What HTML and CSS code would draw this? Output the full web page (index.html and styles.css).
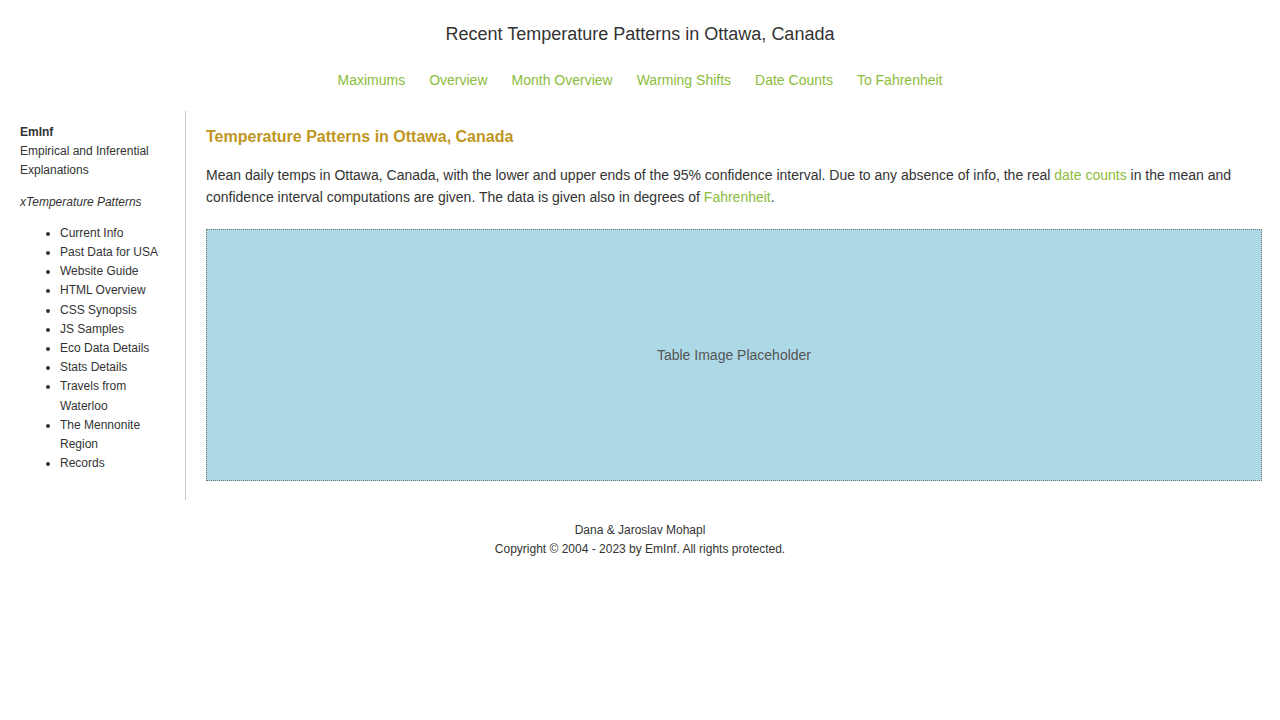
FILE: index.html
```html
<!DOCTYPE html>
<html lang="en">
<head>
<meta charset="utf-8">
<title>Recent Temperature Patterns in Ottawa, Canada</title>
<link rel="stylesheet" href="styles.css">
</head>
<body>
<header class="site-header">
  <h1 class="site-title">Recent Temperature Patterns in Ottawa, Canada</h1>
  <nav class="top-nav">
    <a href="#">Maximums</a>
    <a href="#">Overview</a>
    <a href="#">Month Overview</a>
    <a href="#">Warming Shifts</a>
    <a href="#">Date Counts</a>
    <a href="#">To Fahrenheit</a>
  </nav>
</header>
<div class="layout">
  <aside class="sidebar">
    <div class="brand"><strong>EmInf</strong><br>Empirical and Inferential Explanations</div>
    <p class="section-name">xTemperature Patterns</p>
    <ul class="side-list">
      <li>Current Info</li>
      <li>Past Data for USA</li>
      <li>Website Guide</li>
      <li>HTML Overview</li>
      <li>CSS Synopsis</li>
      <li>JS Samples</li>
      <li>Eco Data Details</li>
      <li>Stats Details</li>
      <li>Travels from Waterloo</li>
      <li>The Mennonite Region</li>
      <li>Records</li>
    </ul>
  </aside>
  <main class="main">
    <h2 class="page-heading">Temperature Patterns in Ottawa, Canada</h2>
    <p class="intro">Mean daily temps in Ottawa, Canada, with the lower and upper ends of the 95% confidence interval. Due to any absence of info, the real <a href="#">date counts</a> in the mean and confidence interval computations are given. The data is given also in degrees of <a href="#">Fahrenheit</a>.</p>
    <div class="placeholder">Table Image Placeholder</div>
  </main>
</div>
<footer class="site-footer">
  <div>Dana &amp; Jaroslav Mohapl</div>
  <div>Copyright © 2004 - 2023 by EmInf. All rights protected.</div>
</footer>
</body>
</html>
```
FILE: styles.css
```css
html, body {
  margin: 0;
  padding: 0;
  background: #fff;
}
body {
  font-family: "Liberation Sans", Arial, sans-serif;
  color: #333;
}
a {
  color: #8cbc3c;
  text-decoration: none;
}
.site-header {
  text-align: center;
  padding-top: 23px;
}
.site-title {
  margin: 0;
  font-size: 18px;
  font-weight: normal;
  line-height: 22px;
  color: #333;
}
.top-nav {
  display: flex;
  justify-content: center;
  gap: 24px;
  margin-top: 27px;
  font-size: 14px;
  line-height: 17px;
}
.layout {
  display: flex;
  margin-top: 22px;
}
.sidebar {
  width: 165px;
  flex: 0 0 165px;
  padding: 12px 0 19px 20px;
  border-right: 1px solid #ccc;
  font-size: 12px;
  line-height: 19.2px;
}
.brand strong {
  font-weight: bold;
}
.section-name {
  font-style: italic;
  margin: 12px 0 12px;
}
.side-list {
  margin: 0;
  padding-left: 40px;
  padding-right: 10px;
}
.main {
  flex: 1;
  padding: 16px 18px 19px 20px;
}
.page-heading {
  margin: 0;
  font-size: 16px;
  line-height: 19px;
  font-weight: bold;
  color: #c0961f;
}
.intro {
  margin: 18px 0 21px;
  font-size: 14px;
  line-height: 22px;
}
.placeholder {
  height: 250px;
  background: #add8e6;
  border: 1px dotted #777;
  display: flex;
  align-items: center;
  justify-content: center;
  font-size: 14px;
  color: #555;
}
.site-footer {
  text-align: center;
  font-size: 12px;
  line-height: 19px;
  padding-top: 21px;
  padding-bottom: 20px;
}
```
